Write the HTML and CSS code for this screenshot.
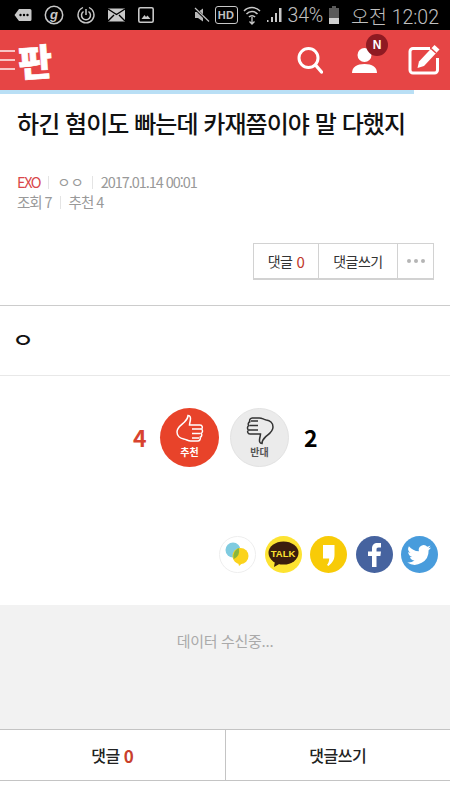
FILE: index.html
```html
<!DOCTYPE html>
<html lang="ko">
<head>
<meta charset="utf-8">
<title>판</title>
<link rel="stylesheet" href="styles.css">
</head>
<body>
<div class="status">
  <div class="status-left">
    <svg class="si" width="18" height="16" viewBox="0 0 18 16"><path d="M5 2h11a1.500 1.500 0 0 1 1.500 1.500v9A1.500 1.500 0 0 1 16 14H5L0.500 8z" fill="#c8c8c8"/><circle cx="6.500" cy="8" r="1.200" fill="#000"/><circle cx="10" cy="8" r="1.200" fill="#000"/><circle cx="13.500" cy="8" r="1.200" fill="#000"/></svg>
    <svg class="si" width="20" height="20" viewBox="0 0 20 20"><circle cx="10" cy="10" r="8.700" fill="none" stroke="#c8c8c8" stroke-width="1.500"/><text x="10" y="14" text-anchor="middle" class="si-g">g</text></svg>
    <svg class="si" width="20" height="20" viewBox="0 0 20 20"><path d="M7 2.500a8 8 0 1 0 6 0" fill="none" stroke="#c8c8c8" stroke-width="1.300"/><path d="M7.500 6.500a4.500 4.500 0 1 0 5 0" fill="none" stroke="#c8c8c8" stroke-width="1.500"/><path d="M10 4v6" stroke="#c8c8c8" stroke-width="1.500"/></svg>
    <svg class="si" width="18" height="14" viewBox="0 0 18 14"><rect width="17" height="13" y="0.500" fill="#c8c8c8"/><path d="M0 1l8.500 5.500L17 1M0 13l6-6M17 13l-6-6" fill="none" stroke="#000" stroke-width="1.400"/></svg>
    <svg class="si" width="16" height="16" viewBox="0 0 16 16"><rect x="0.800" y="0.800" width="14.400" height="14.400" rx="1.500" fill="none" stroke="#c8c8c8" stroke-width="1.600"/><path d="M3.500 12l3-4 1.500 2 1.500-1.500 3 3.500z" fill="#c8c8c8"/></svg>
  </div>
  <div class="status-right">
    <svg width="16" height="16" viewBox="0 0 16 16"><path d="M1 5h3l5-3.500v13L4 11H1z" fill="#b8b8b8"/><path d="M0.500 1l14 13.500" stroke="#000" stroke-width="2.500"/><path d="M1 1l14 13.500" stroke="#c0c0c0" stroke-width="1.200"/></svg>
    <span class="hd">HD</span>
    <svg width="18" height="20" viewBox="0 0 18 20"><path d="M1 6a11 11 0 0 1 16 0M3.500 9a7.500 7.500 0 0 1 11 0M6 12a4 4 0 0 1 6 0" fill="none" stroke="#c8c8c8" stroke-width="1.500"/><path d="M9 12v7M6.500 16.500L9 19l2.500-2.500" fill="none" stroke="#c8c8c8" stroke-width="1.300"/></svg>
    <svg width="16" height="16" viewBox="0 0 16 16"><path d="M1 13h1.500v2H1zM5 10h2v5H5zM9 6h2v9H9zM13 1h2.500v14H13z" fill="#c8c8c8"/></svg>
    <span class="pct">34%</span>
    <svg width="12" height="20" viewBox="0 0 12 20"><path d="M4 1h4v2h3v16H1V3h3z" fill="#5a5a5a"/><path d="M1 13h10v6H1z" fill="#d0d0d0"/></svg>
    <span class="clock">오전 12:02</span>
  </div>
</div>

<header class="topbar">
  <div class="brand">
    <div class="burger"><i></i><i></i><i></i></div>
    <span class="logo">판</span>
  </div>
  <div class="actions">
    <svg width="26" height="28" viewBox="0 0 26 28"><circle cx="11.500" cy="12" r="9.500" fill="none" stroke="#fff" stroke-width="3"/><path d="M18.500 19l6 7" stroke="#fff" stroke-width="3.400" stroke-linecap="round"/></svg>
    <div class="user">
      <svg width="27" height="27" viewBox="0 0 27 27"><circle cx="13.500" cy="8" r="7" fill="#fff"/><path d="M1 26c0-6 5-9 12.500-9S26 20 26 26z" fill="#fff"/></svg>
      <span class="badge">N</span>
    </div>
    <svg width="32" height="32" viewBox="0 0 32 32"><path d="M29.500 14v12a3 3 0 0 1-3 3H5a3 3 0 0 1-3-3V7.500a3 3 0 0 1 3-3h17" fill="none" stroke="#fff" stroke-width="3"/><path d="M26.500 1l5 4.500L16 22l-6.500 2 1.500-6.500z" fill="#fff"/><path d="M23 4.500l5 4.500" stroke="#e64545" stroke-width="1.500"/></svg>
  </div>
</header>
<div class="progress"><div class="progress-fill"></div></div>

<main>
  <h1 class="title">하긴 혐이도 빠는데 카재쯤이야 말 다했지</h1>
  <div class="meta">
    <div class="meta-row"><span class="cat">EXO</span><i class="sep"></i><span class="nick">ㅇㅇ</span><i class="sep"></i><span>2017.01.14 00:01</span></div>
    <div class="meta-row"><span>조회 7</span><i class="sep"></i><span>추천 4</span></div>
  </div>
  <div class="tools">
    <div class="toolgroup">
      <span class="tool t1">댓글 <em>0</em></span>
      <span class="tool t2">댓글쓰기</span>
      <span class="tool t3"><i></i><i></i><i></i></span>
    </div>
  </div>
  <div class="body-text"><span class="body-glyph">ㅇ</span></div>

  <section class="vote">
    <span class="count red">4</span>
    <div class="circle up">
      <svg width="30" height="31" viewBox="0 0 30 31"><path d="M13 1.500c2.500 0 2.800 2.500 2.300 5-.4 2-.8 3.500-.8 4.500H25c2.500 0 3 3 1.500 4 1.500 1 1.300 3.500-.3 4.300 1 1.200.6 3.400-1 4 .6 1.600-.5 3.700-2.500 3.700h-7c-3 0-4-1.500-7-2-3.500-.5-6.700-3-6.700-7 0-5 5-7.500 7.500-10 2-2 3.500-4 3.500-6.500z" fill="none" stroke="#fff" stroke-width="1.500"/><path d="M17 15h9M17 19.500h8.500M17 24h7" stroke="#fff" stroke-width="1.400"/></svg>
      <span>추천</span>
    </div>
    <div class="circle down">
      <svg width="30" height="31" viewBox="0 0 30 31"><path d="M17 29.500c-2.500 0-2.800-2.500-2.300-5 .4-2 .8-3.500.8-4.500H5c-2.500 0-3-3-1.500-4-1.500-1-1.300-3.500.3-4.300-1-1.200-.6-3.400 1-4C4.200 6 5.300 3.900 7.300 3.900h7c3 0 4 1.500 7 2 3.500.5 6.700 3 6.700 7 0 5-5 7.500-7.500 10-2 2-3.500 4-3.500 6.500z" fill="none" stroke="#333" stroke-width="1.500"/><path d="M13 16H4M13 11.500H4.500M13 7H6" stroke="#333" stroke-width="1.400"/></svg>
      <span>반대</span>
    </div>
    <span class="count">2</span>
  </section>

  <section class="share">
    <svg class="sh" width="37" height="37" viewBox="0 0 37 37"><circle cx="18.500" cy="18.500" r="18" fill="#fff" stroke="#eee"/><circle cx="14" cy="14" r="7.500" fill="#7fcbe0"/><circle cx="21.500" cy="20" r="8" fill="#fbd31c"/><path d="M19 26l1 4 3.500-3z" fill="#fbd31c"/><path d="M19 13.700a7.500 7.500 0 0 1-3.500 7.700 8 8 0 0 1 3.500-7.700z" fill="#8ab63c" stroke="#8ab63c" stroke-width="2"/></svg>
    <div class="sh talk"><svg width="37" height="37" viewBox="0 0 37 37"><circle cx="18.500" cy="18.500" r="18.500" fill="#fde332"/><ellipse cx="18.500" cy="17" rx="15" ry="11.500" fill="#3b1d0e"/><path d="M10 25l-1 6 7-4z" fill="#3b1d0e"/></svg><span>TALK</span></div>
    <svg class="sh" width="37" height="37" viewBox="0 0 37 37"><circle cx="18.500" cy="18.500" r="18.500" fill="#f8cb07"/><path d="M13 9h11.500v10c0 5-2.500 8-6 11l-1.500-1c1.500-2 2.200-4 2.200-6.500H13z" fill="#fff"/></svg>
    <svg class="sh" width="37" height="37" viewBox="0 0 37 37"><circle cx="18.500" cy="18.500" r="18.500" fill="#46639f"/><path d="M16 31V20h-4v-4.500h4v-3c0-3.500 2-5.500 5.500-5.500H25v4.500h-2.500c-1.500 0-2 .7-2 2v2H25l-.6 4.500h-3.900v11z" fill="#fff"/></svg>
    <svg class="sh" width="37" height="37" viewBox="0 0 37 37"><circle cx="18.500" cy="18.500" r="18.500" fill="#489cdc"/><path d="M30 11.500c-.9.400-1.800.7-2.800.8 1-.6 1.800-1.600 2.200-2.700-.9.600-2 1-3.100 1.200a4.900 4.900 0 0 0-8.400 4.500c-4-.2-7.600-2.100-10-5.100a4.900 4.900 0 0 0 1.500 6.500c-.8 0-1.500-.2-2.200-.6 0 2.400 1.700 4.400 3.900 4.900-.7.200-1.500.2-2.200.1.600 2 2.400 3.400 4.600 3.400A9.800 9.800 0 0 1 6.200 26.500a13.900 13.900 0 0 0 21.400-12.300c1-.7 1.800-1.600 2.400-2.700z" fill="#fff"/></svg>
  </section>

  <section class="loading">데이터 수신중...</section>

  <nav class="bottom">
    <span class="bottom-item">댓글 <em>0</em></span>
    <span class="bottom-item">댓글쓰기</span>
  </nav>
</main>
</body>
</html>
```

FILE: styles.css
```css
* { box-sizing: border-box; }
html, body { margin: 0; padding: 0; }
body {
  width: 450px;
  height: 800px;
  overflow: hidden;
  background: #fff;
  color: #111;
  font-family: "Noto Sans CJK KR", "Noto Sans", sans-serif;
}
em { font-style: normal; }

.status {
  height: 30px;
  background: #000;
  color: #c0c0c0;
  display: flex;
  justify-content: space-between;
  align-items: center;
  padding: 0 11px 0 14px;
}
.status-left { display: flex; align-items: center; gap: 12px; }
.status-right { display: flex; align-items: center; gap: 5px; font-family: Roboto, sans-serif; font-size: 20px; }
.si { display: block; }
.si-g { font: italic 700 13px "Liberation Sans", sans-serif; fill: #c8c8c8; }
.hd {
  border: 1.500px solid #c8c8c8;
  border-radius: 3px;
  font: 700 11px/16px "Liberation Sans", sans-serif;
  padding: 0 2px;
  letter-spacing: .5px;
}
.pct { margin-left: 1px; letter-spacing: -.2px; font-size: 19.500px; font-weight: 300; }
.clock { margin-left: 6px; font-family: Roboto, "Noto Sans CJK KR", sans-serif; font-size: 19.500px; font-weight: 300; }

.topbar {
  height: 60px;
  background: #e64545;
  display: flex;
  justify-content: space-between;
  align-items: center;
  padding-right: 10px;
}
.brand { display: flex; align-items: center; gap: 3px; }
.burger { display: flex; flex-direction: column; gap: 7px; width: 15px; }
.burger i { display: block; height: 2px; background: #f8c5c5; }
.logo {
  display: block;
  color: #fff;
  font-weight: 900;
  font-size: 37px;
  line-height: 44px;
  transform: rotate(-4deg);
  -webkit-text-stroke: .6px #fff;
}
.actions { display: flex; align-items: center; gap: 29px; }
.actions svg { display: block; }
.user { position: relative; left: -1px; }
.badge {
  position: absolute;
  top: -13px;
  left: 15px;
  width: 22px;
  height: 22px;
  border-radius: 50%;
  background: #8f1a22;
  color: #fff;
  font: 700 12px/22px "Liberation Sans", sans-serif;
  text-align: center;
}

.progress { height: 4px; background: #fff; }
.progress-fill { width: 414px; height: 4px; background: #b9dff5; }

.title {
  margin: 0;
  padding: 11px 0 0 17px;
  height: 66px;
  font-size: 24px;
  line-height: 36px;
  font-weight: 500;
  letter-spacing: -.95px;
  color: #111;
  white-space: nowrap;
}
.meta { padding: 12px 0 0 17px; height: 70px; color: #999; font-size: 14.500px; letter-spacing: -1.050px; line-height: 20px; }
.meta-row { display: flex; align-items: center; }
.cat { color: #d9474a; letter-spacing: -1.400px; }
.nick { letter-spacing: 0; }
.sep { width: 1px; height: 13px; background: #e4e4e4; margin: 0 8px; }

.tools { display: flex; justify-content: flex-end; padding: 13px 16px 0 0; height: 76px; border-bottom: 1px solid #ccc; }
.toolgroup { display: flex; height: 37px; border: 1px solid #d2d2d2; border-width: 1px 1px 2px; font-size: 14px; color: #333; letter-spacing: -.5px; }
.tool { display: flex; align-items: center; justify-content: center; gap: 4px; border-left: 1px solid #d2d2d2; }
.tool:first-child { border-left: 0; }
.tool em { color: #c0392b; font-size: 15px; }
.t1 { width: 64px; }
.t2 { width: 79px; }
.t3 { width: 36px; gap: 3px; }
.t3 i { width: 4px; height: 4px; border-radius: 50%; background: #b5b5b5; }

.body-text {
  height: 70px;
  padding-left: 12px;
  border-bottom: 1px solid #e8e8e8;
  font-size: 20px;
  line-height: 67px;
  color: #111;
  font-weight: 500;
}
.body-glyph { display: inline-block; transform: scaleX(1.2); transform-origin: left center; }

.vote { display: flex; align-items: center; justify-content: center; gap: 11px; height: 122px; padding-right: 1px; }
.count { width: 12px; margin: 0 4px; font-size: 23px; font-weight: 700; line-height: 1; color: #000; text-align: center; }
.count.red { color: #d8432f; }
.circle { width: 59px; height: 59px; border-radius: 50%; display: flex; flex-direction: column; align-items: center; padding-top: 6px; font-size: 10px; line-height: 13px; font-weight: 700; }
.circle svg { display: block; margin-bottom: 0; }
.up { background: #e8432a; color: #fff; }
.down { background: #ebebeb; border: 1px solid #e2e2e2; color: #555; padding-top: 5px; }

.share { display: flex; justify-content: flex-end; gap: 8.500px; height: 107px; padding: 38px 12px 0 0; align-items: flex-start; }
.sh { display: block; flex: none; }
.talk { position: relative; width: 37px; height: 37px; }
.talk svg { display: block; }
.talk span { position: absolute; left: 0; right: 0; top: 11px; text-align: center; font: 700 9.500px/13px "Liberation Sans", sans-serif; color: #fde332; }

.loading {
  height: 124px;
  background: #f2f2f2;
  color: #aaa;
  font-size: 15px;
  text-align: center;
  padding-top: 26px;
  line-height: 20px;
  letter-spacing: -.3px;
}

.bottom { display: flex; height: 52px; border-top: 1px solid #c4c4c4; border-bottom: 1px solid #c4c4c4; }
.bottom-item { flex: 1; display: flex; align-items: center; justify-content: center; gap: 4px; font-size: 16px; font-weight: 500; color: #222; letter-spacing: -.5px; }
.bottom-item + .bottom-item { border-left: 1px solid #c4c4c4; }
.bottom-item em { color: #c93f2c; font-weight: 700; font-size: 17px; }
```
